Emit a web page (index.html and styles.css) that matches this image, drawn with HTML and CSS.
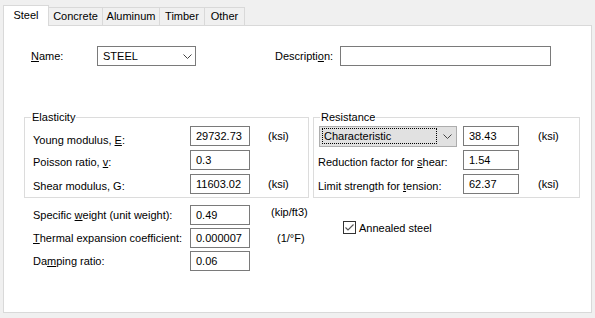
FILE: index.html
```html
<!DOCTYPE html>
<html>
<head>
<meta charset="utf-8">
<link rel="stylesheet" href="styles.css">
</head>
<body>
<div class="tabs">
  <div class="tab active tw-steel">Steel</div>
  <div class="tab tw-concrete">Concrete</div>
  <div class="tab tw-aluminum">Aluminum</div>
  <div class="tab tw-timber">Timber</div>
  <div class="tab tw-other">Other</div>
</div>
<div class="panel">
  <div class="name-row">
    <span class="lbl name-lbl"><u>N</u>ame:</span>
    <div class="combo name-combo">
      <span>STEEL</span>
      <svg class="chev" width="9" height="5" viewBox="0 0 9 5"><path d="M0.5 0.5 L4.5 4.5 L8.5 0.5" fill="none" stroke="#444" stroke-width="1"/></svg>
    </div>
    <span class="lbl desc-lbl">Descripti<u>o</u>n:</span>
    <div class="input desc-input"></div>
  </div>

  <div class="groups">
    <fieldset class="group elasticity">
      <legend class="leg-elast">Elasticity</legend>
      <div class="grid elast-grid">
        <span class="lbl glbl young">Young modulus, <u>E</u>:</span>
        <div class="input">29732.73</div>
        <span class="unit u-elast">(ksi)</span>

        <span class="lbl glbl">Poisson ratio, <u>v</u>:</span>
        <div class="input">0.3</div>
        <span class="unit"></span>

        <span class="lbl glbl">Shear modulus, G:</span>
        <div class="input">11603.02</div>
        <span class="unit u-elast">(ksi)</span>
      </div>
    </fieldset>

    <fieldset class="group resistance">
      <legend class="leg-res">Resistance</legend>
      <div class="grid res-grid">
        <div class="combo res-combo">
          <span class="focus">Characteristic</span>
          <svg class="chev" width="9" height="5" viewBox="0 0 9 5"><path d="M0.5 0.5 L4.5 4.5 L8.5 0.5" fill="none" stroke="#444" stroke-width="1"/></svg>
        </div>
        <div class="input">38.43</div>
        <span class="unit u-res">(ksi)</span>

        <span class="lbl glbl">Reduction factor for <u>s</u>hear:</span>
        <div class="input">1.54</div>
        <span class="unit"></span>

        <span class="lbl glbl">Limit strength for <u>t</u>ension:</span>
        <div class="input">62.37</div>
        <span class="unit u-res">(ksi)</span>
      </div>
    </fieldset>
  </div>

  <div class="bottom">
    <div class="grid bottom-grid">
      <span class="lbl">Specific <u>w</u>eight (unit weight):</span>
      <div class="input">0.49</div>
      <span class="unit u-kip">(kip/ft3)</span>

      <span class="lbl"><u>T</u>hermal expansion coefficient:</span>
      <div class="input">0.000007</div>
      <span class="unit u-therm">(1/°F)</span>

      <span class="lbl">Da<u>m</u>ping ratio:</span>
      <div class="input">0.06</div>
      <span class="unit"></span>
    </div>
    <div class="check-col">
      <div class="check">
        <svg width="13" height="13" viewBox="0 0 13 13"><rect x="0.5" y="0.5" width="12" height="12" fill="#fff" stroke="#333"/><path d="M2.5 6.5 L5 9 L10.5 3.5" fill="none" stroke="#555" stroke-width="1.1"/></svg>
        <span class="check-lbl">Annealed steel</span>
      </div>
    </div>
  </div>
</div>
</body>
</html>
```
FILE: styles.css
```css
* { box-sizing: border-box; }
html, body { margin: 0; }
body {
  background: #f0f0f0;
  font-family: "Liberation Sans", Arial, sans-serif;
  font-size: 11px;
  color: #000;
  width: 595px;
  height: 318px;
  overflow: hidden;
}
u { text-decoration: underline; text-underline-offset: 1px; }

/* tabs */
.tabs {
  display: flex;
  align-items: flex-end;
  height: 25px;
  padding-left: 3px;
  position: relative;
  z-index: 1;
}
.tab {
  height: 18px;
  border: 1px solid #d9d9d9;
  border-bottom: none;
  margin-left: -1px;
  background: #f0f0f0;
  text-align: center;
  line-height: 17px;
}
.tab.active {
  margin-left: 0;
  height: 21px;
  margin-bottom: -1px;
  background: #fff;
  line-height: 18px;
}
.tw-steel { width: 46px; }
.tw-concrete { width: 55px; }
.tw-aluminum { width: 58px; }
.tw-timber { width: 46px; }
.tw-other { width: 41px; }

/* panel */
.panel {
  margin-left: 3px;
  width: 589px;
  height: 288px;
  border: 1px solid #d9d9d9;
  background: #fff;
}

.input {
  height: 20px;
  border: 1px solid #7a7a7a;
  background: #fff;
  padding-left: 5px;
  line-height: 18px;
  white-space: nowrap;
}
.combo {
  height: 20px;
  border: 1px solid #7a7a7a;
  display: flex;
  align-items: center;
  justify-content: space-between;
  padding: 0 3px 0 5px;
}
.chev { display: block; }

.name-row {
  display: flex;
  align-items: center;
  margin-top: 20px;
  padding-left: 27px;
  height: 20px;
}
.name-lbl { width: 66px; }
.name-combo { width: 99px; }
.desc-lbl { margin-left: 79px; width: 65px; }
.desc-input { width: 211px; }

/* groups */
.groups {
  display: flex;
  gap: 4px;
  margin-top: 44px;
  padding-left: 20px;
}
.group {
  margin: 0;
  border: 1px solid #dcdcdc;
  padding: 2px 0 3px 0;
  min-width: 0;
}
.group legend {
  padding: 0 1px;
  line-height: 14px;
}
.elasticity { width: 285px; padding-left: 8px; }
.resistance { width: 267px; padding-left: 4px; }
.leg-elast { margin-left: -2px; }
.leg-res { margin-left: 2px; }

.grid {
  display: grid;
  grid-auto-rows: 20px;
  row-gap: 4px;
  align-items: center;
}
.elast-grid { grid-template-columns: 157px 60px auto; }
.res-grid { grid-template-columns: 145px 56px auto; }
.glbl { align-self: start; line-height: 20px; padding-top: 2px; white-space: nowrap; }
.young { padding-top: 4px; }
.unit { white-space: nowrap; }
.u-elast { padding-left: 18px; }
.u-res { padding-left: 19px; }

.res-combo {
  margin-left: 1px;
  width: 138px;
  height: 21px;
  background: #e1e1e1;
  border-color: #adadad;
  padding: 0 4px 0 2px;
}
.focus {
  width: 115px;
  height: 16px;
  border: 1px dotted #000;
  line-height: 14px;
  padding-left: 1px;
}

/* bottom */
.bottom {
  display: flex;
  margin-top: 7px;
  padding-left: 29px;
}
.bottom-grid {
  grid-template-columns: 157px 60px 64px;
  row-gap: 3px;
}
.u-kip { padding-left: 21px; align-self: start; line-height: 14px; }
.u-therm { padding-left: 27px; }
.check-col { margin-left: 29px; padding-top: 16px; }
.check { display: flex; align-items: center; }
.check svg { display: block; }
.check-lbl { margin-left: 3px; }
```
